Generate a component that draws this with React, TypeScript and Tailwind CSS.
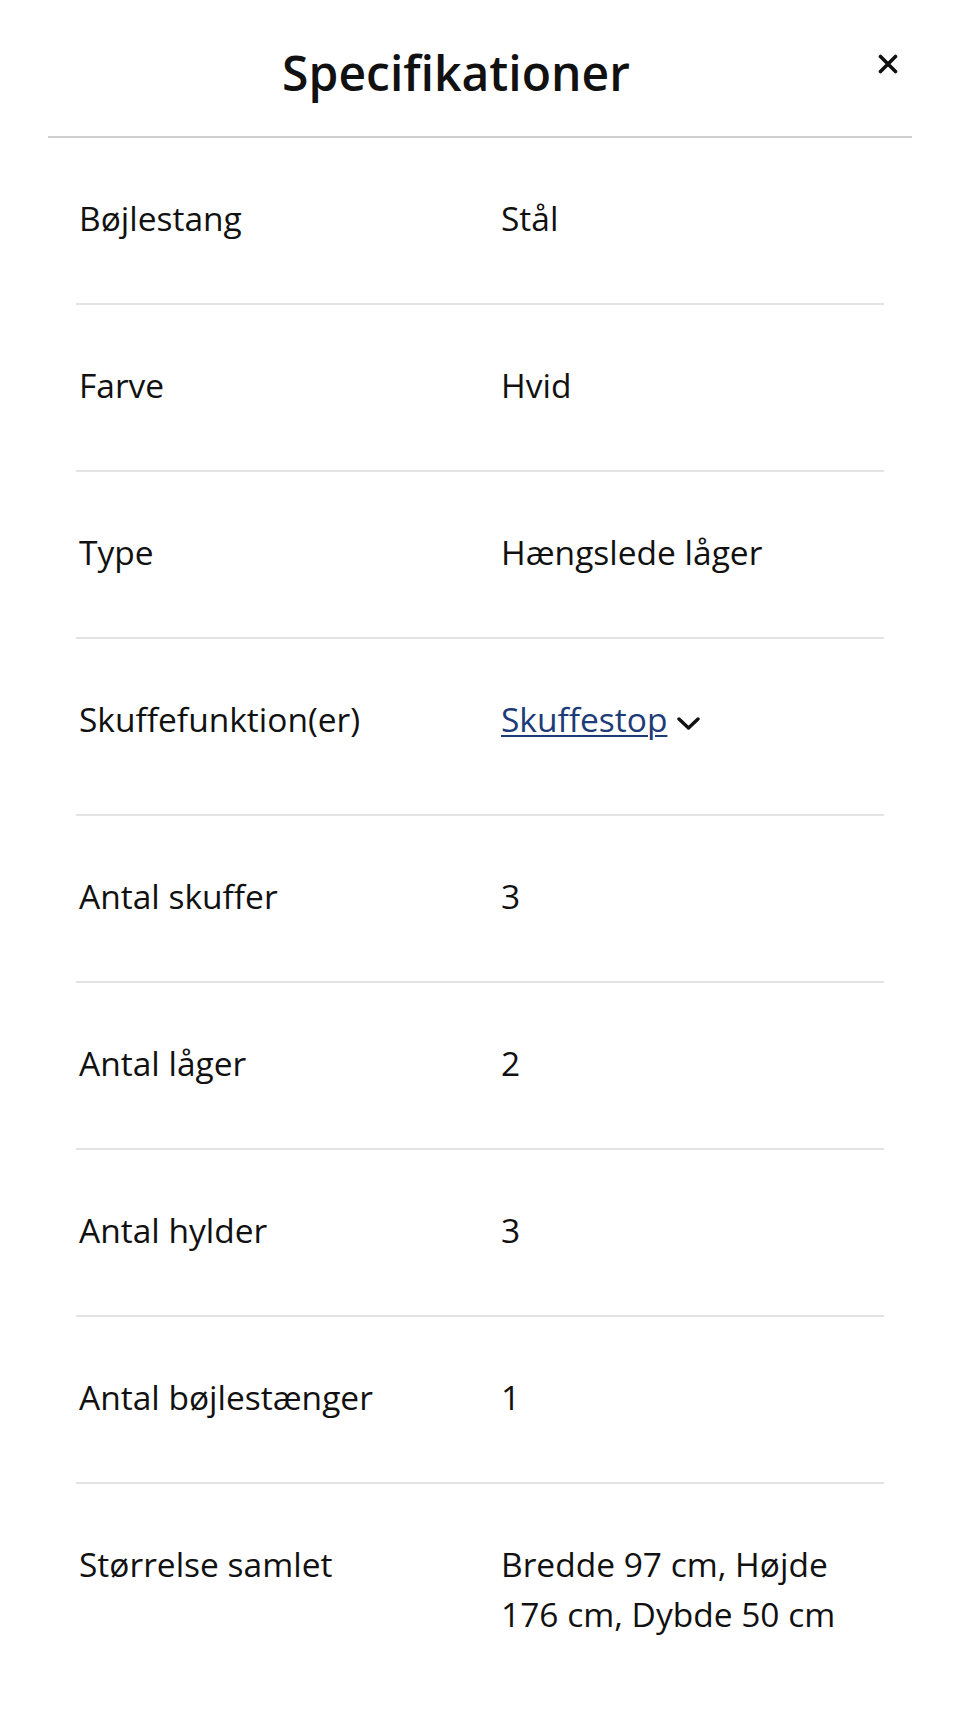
export default function App() {
  const specs = [
    { label: "Bøjlestang", value: "Stål" },
    { label: "Farve", value: "Hvid" },
    { label: "Type", value: "Hængslede låger" },
    { label: "Skuffefunktion(er)", value: "Skuffestop", link: true },
    { label: "Antal skuffer", value: "3" },
    { label: "Antal låger", value: "2" },
    { label: "Antal hylder", value: "3" },
    { label: "Antal bøjlestænger", value: "1" },
    { label: "Størrelse samlet", value: "Bredde 97 cm, Højde 176 cm, Dybde 50 cm" },
  ];

  return (
    <div className="bg-white text-[#111] min-h-[1733px]" style={{ fontFamily: '"Open Sans", sans-serif' }}>
      <div className="mx-[48px] flex border-b-2 border-[#d0d0d0]">
        <h1 className="flex-1 text-center text-[48px] font-semibold leading-[66px] pt-[40px] pb-[30px]">
          Specifikationer
        </h1>
        <button className="w-[48px] h-[48px] mt-[40px] flex items-center justify-center self-start" aria-label="Luk">
          <svg width="20" height="20" viewBox="0 0 20 20" fill="none">
            <path d="M2.5 2.5L17.5 17.5M17.5 2.5L2.5 17.5" stroke="#111" strokeWidth="3.6" strokeLinecap="round" />
          </svg>
        </button>
      </div>

      <div className="mx-[76px]">
        {specs.map((spec, i) => (
          <div
            key={spec.label}
            className={
              "grid grid-cols-[422px_1fr] px-[3px] pt-[55px] pb-[60px] text-[33.5px] leading-[50px] " +
              (i < specs.length - 1 ? "border-b-2 border-[#e3e3e3]" : "")
            }
          >
            <div>{spec.label}</div>
            {spec.link ? (
              <div className="pb-[10px]">
                <button className="flex items-center gap-[10px] h-[50px]">
                  <span className="text-[#1c3b78] underline decoration-2 underline-offset-[3px]">{spec.value}</span>
                  <svg width="23" height="13" viewBox="0 0 23 13" fill="none" className="mt-[9px]">
                    <path d="M2 2L11.5 11L21 2" stroke="#111" strokeWidth="3.4" strokeLinecap="round" strokeLinejoin="round" />
                  </svg>
                </button>
              </div>
            ) : (
              <div>{spec.value}</div>
            )}
          </div>
        ))}
      </div>
    </div>
  );
}
